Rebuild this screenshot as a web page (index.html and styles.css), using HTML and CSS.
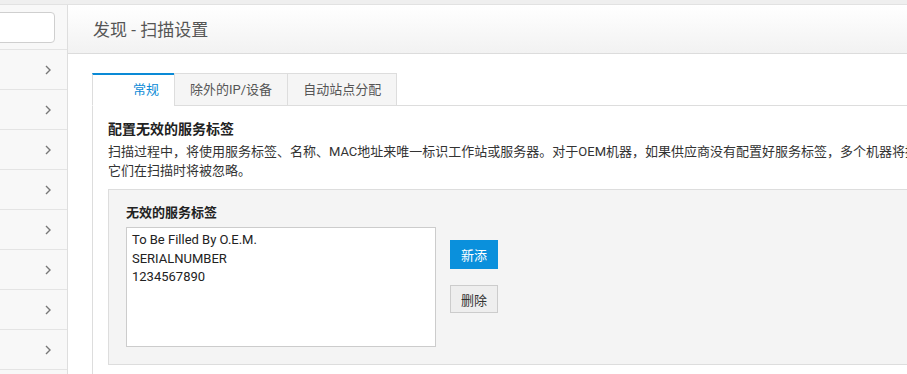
FILE: index.html
```html
<!DOCTYPE html>
<html lang="zh-CN">
<head>
<meta charset="utf-8">
<title>发现 - 扫描设置</title>
<link rel="stylesheet" href="styles.css">
</head>
<body>
<div class="topbar"></div>
<div class="layout">
  <aside class="sidebar">
    <div class="search-wrap"><input class="search" type="text"></div>
    <div class="nav-item"><svg class="chev" width="6" height="10" viewBox="0 0 6 10"><polyline points="1,1 5,5 1,9" fill="none" stroke="#777" stroke-width="1.4"/></svg></div>
    <div class="nav-item"><svg class="chev" width="6" height="10" viewBox="0 0 6 10"><polyline points="1,1 5,5 1,9" fill="none" stroke="#777" stroke-width="1.4"/></svg></div>
    <div class="nav-item"><svg class="chev" width="6" height="10" viewBox="0 0 6 10"><polyline points="1,1 5,5 1,9" fill="none" stroke="#777" stroke-width="1.4"/></svg></div>
    <div class="nav-item"><svg class="chev" width="6" height="10" viewBox="0 0 6 10"><polyline points="1,1 5,5 1,9" fill="none" stroke="#777" stroke-width="1.4"/></svg></div>
    <div class="nav-item"><svg class="chev" width="6" height="10" viewBox="0 0 6 10"><polyline points="1,1 5,5 1,9" fill="none" stroke="#777" stroke-width="1.4"/></svg></div>
    <div class="nav-item"><svg class="chev" width="6" height="10" viewBox="0 0 6 10"><polyline points="1,1 5,5 1,9" fill="none" stroke="#777" stroke-width="1.4"/></svg></div>
    <div class="nav-item"><svg class="chev" width="6" height="10" viewBox="0 0 6 10"><polyline points="1,1 5,5 1,9" fill="none" stroke="#777" stroke-width="1.4"/></svg></div>
    <div class="nav-item"><svg class="chev" width="6" height="10" viewBox="0 0 6 10"><polyline points="1,1 5,5 1,9" fill="none" stroke="#777" stroke-width="1.4"/></svg></div>
  </aside>
  <main class="main">
    <header class="page-header"><h1 class="page-title">发现 - 扫描设置</h1></header>
    <div class="content">
      <div class="tabs">
        <div class="tab tab-active">常规</div>
        <div class="tab">除外的IP/设备</div>
        <div class="tab">自动站点分配</div>
      </div>
      <div class="panel">
        <h2 class="section-title">配置无效的服务标签</h2>
        <p class="desc">扫描过程中，将使用服务标签、名称、MAC地址来唯一标识工作站或服务器。对于OEM机器，如果供应商没有配置好服务标签，多个机器将拥有相同的服务标签。添加到此列表的服务标签，<br>它们在扫描时将被忽略。</p>
        <div class="box">
          <div class="box-label">无效的服务标签</div>
          <div class="box-row">
            <div class="list">
              <div class="list-item">To Be Filled By O.E.M.</div>
              <div class="list-item">SERIALNUMBER</div>
              <div class="list-item">1234567890</div>
            </div>
            <div class="actions">
              <button class="btn btn-primary">新添</button>
              <button class="btn btn-default">删除</button>
            </div>
          </div>
        </div>
      </div>
    </div>
  </main>
</div>
</body>
</html>
```
FILE: styles.css
```css
html, body {
  margin: 0;
  padding: 0;
}
body {
  width: 907px;
  height: 374px;
  overflow: hidden;
  background: #fff;
  font-family: Roboto, "Noto Sans CJK SC", sans-serif;
  font-size: 13px;
  color: #333;
}
.topbar {
  height: 4px;
  background: #efefef;
  border-bottom: 1px solid #e2e2e2;
}
.layout {
  display: flex;
  height: 369px;
}
.sidebar {
  flex: none;
  width: 67px;
  background: #f8f8f8;
  border-right: 1px solid #dedede;
}
.search-wrap {
  height: 44px;
  border-bottom: 1px solid #e4e4e4;
  display: flex;
  align-items: center;
  overflow: hidden;
}
.search {
  box-sizing: border-box;
  width: 75px;
  height: 31px;
  margin-left: -20px;
  border: 1px solid #cfcfcf;
  border-radius: 4px;
  background: #fff;
  outline: none;
  flex: none;
}
.nav-item {
  height: 39px;
  border-bottom: 1px solid #e4e4e4;
  display: flex;
  align-items: center;
  justify-content: flex-end;
  padding-right: 16px;
}
.chev {
  display: block;
}
.main {
  flex: 1;
  min-width: 0;
  overflow: hidden;
}
.page-header {
  height: 48px;
  border-bottom: 1px solid #dcdcdc;
  background: linear-gradient(#ffffff, #f2f2f2);
  display: flex;
  align-items: center;
  padding-left: 25px;
}
.page-title {
  margin: 0;
  font-size: 17px;
  font-weight: normal;
  color: #555;
  line-height: 24px;
  padding-top: 2px;
}
.content {
  padding: 19px 0 0 24px;
  width: 1000px;
}
.tabs {
  display: flex;
  border-bottom: 1px solid #dddddd;
  height: 32px;
}
.tab {
  box-sizing: border-box;
  height: 33px;
  border: 1px solid #dddddd;
  background: #f5f5f5;
  color: #555;
  padding: 0 15px;
  line-height: 31px;
  margin-left: -1px;
  white-space: nowrap;
}
.tab-active {
  margin-left: 0;
  background: #fff;
  border-top: 2px solid #0a8ad6;
  border-bottom-color: #fff;
  color: #0a8ad6;
  padding-left: 40px;
  line-height: 30px;
}
.panel {
  border-left: 1px solid #dddddd;
  padding: 13px 0 20px 15px;
}
.section-title {
  margin: 0;
  font-size: 14px;
  font-weight: bold;
  line-height: 20px;
  color: #222;
}
.desc {
  margin: 3px 0 0 0;
  line-height: 19px;
  white-space: nowrap;
  color: #333;
}
.box {
  margin-top: 9px;
  background: #f4f4f4;
  border: 1px solid #dddddd;
  padding: 14px 0 17px 17px;
}
.box-label {
  font-weight: bold;
  line-height: 18px;
  color: #222;
  margin-bottom: 5px;
}
.box-row {
  display: flex;
  gap: 14px;
}
.list {
  box-sizing: border-box;
  width: 310px;
  height: 120px;
  background: #fff;
  border: 1px solid #cccccc;
  padding: 3px 5px;
  color: #222;
}
.list-item {
  line-height: 18.5px;
}
.actions {
  display: flex;
  flex-direction: column;
  padding-top: 13px;
  gap: 16px;
}
.btn {
  box-sizing: border-box;
  width: 48px;
  font-family: Roboto, "Noto Sans CJK SC", sans-serif;
  font-size: 13px;
  padding: 0;
  border-radius: 0;
}
.btn-primary {
  height: 29px;
  background: #0a90dc;
  border: 1px solid #0a90dc;
  color: #fff;
}
.btn-default {
  height: 28px;
  background: #eeeeee;
  border: 1px solid #cccccc;
  color: #333;
}
```
